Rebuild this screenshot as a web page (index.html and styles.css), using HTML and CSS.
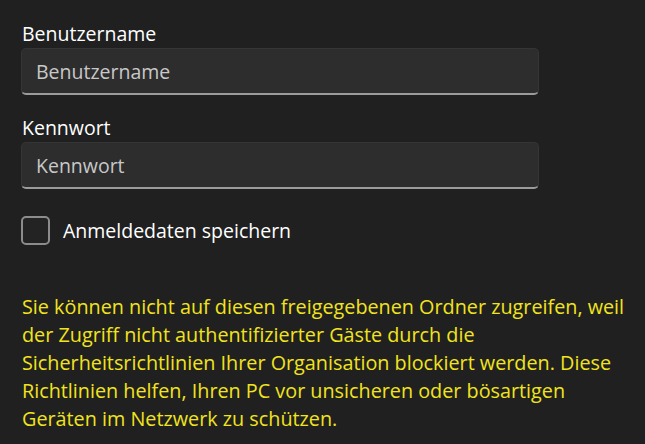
FILE: index.html
```html
<!DOCTYPE html>
<html lang="de">
<head>
<meta charset="utf-8">
<link rel="stylesheet" href="styles.css">
</head>
<body>
<main class="form">
  <div class="field">
    <label class="label" for="user">Benutzername</label>
    <input class="input" id="user" type="text" placeholder="Benutzername">
  </div>
  <div class="field">
    <label class="label" for="pass">Kennwort</label>
    <input class="input" id="pass" type="password" placeholder="Kennwort">
  </div>
  <label class="check">
    <span class="box"></span>
    <span class="check-text">Anmeldedaten speichern</span>
  </label>
  <p class="warning">Sie können nicht auf diesen freigegebenen Ordner zugreifen, weil der Zugriff nicht authentifizierter Gäste durch die Sicherheitsrichtlinien Ihrer Organisation blockiert werden. Diese Richtlinien helfen, Ihren PC vor unsicheren oder bösartigen Geräten im Netzwerk zu schützen.</p>
</main>
</body>
</html>
```
FILE: styles.css
```css
html, body {
  margin: 0;
  padding: 0;
  background: #202020;
  height: 100%;
  overflow: hidden;
}
body {
  font-family: "Open Sans", "Noto Sans", sans-serif;
  color: #ffffff;
}
.form {
  padding: 21px 0 0 21px;
  display: flex;
  flex-direction: column;
}
.field {
  display: flex;
  flex-direction: column;
  width: 518px;
  margin-bottom: 20px;
}
.label {
  font-size: 19.5px;
  line-height: 26px;
  margin-bottom: 1px;
  color: #ffffff;
  padding-left: 1px;
}
.input {
  box-sizing: border-box;
  height: 47px;
  margin: 0;
  padding: 0 14px;
  background: #2d2d2d;
  border: 1px solid #353535;
  border-bottom: 2px solid #9b9b9b;
  border-radius: 5px;
  font-family: inherit;
  font-size: 19.5px;
  color: #ffffff;
  outline: none;
}
.input::placeholder {
  color: #c8c8c8;
}
.check {
  display: flex;
  align-items: center;
  gap: 13px;
  margin-top: 7px;
  font-size: 19.5px;
  line-height: 26px;
}
.box {
  box-sizing: border-box;
  width: 29px;
  height: 29px;
  border: 2px solid #8c8c8c;
  border-radius: 5px;
  background: #232323;
}
.warning {
  margin: 48px 0 0 1px;
  width: 612px;
  font-size: 19.8px;
  line-height: 28px;
  color: #f1e41d;
}
```
